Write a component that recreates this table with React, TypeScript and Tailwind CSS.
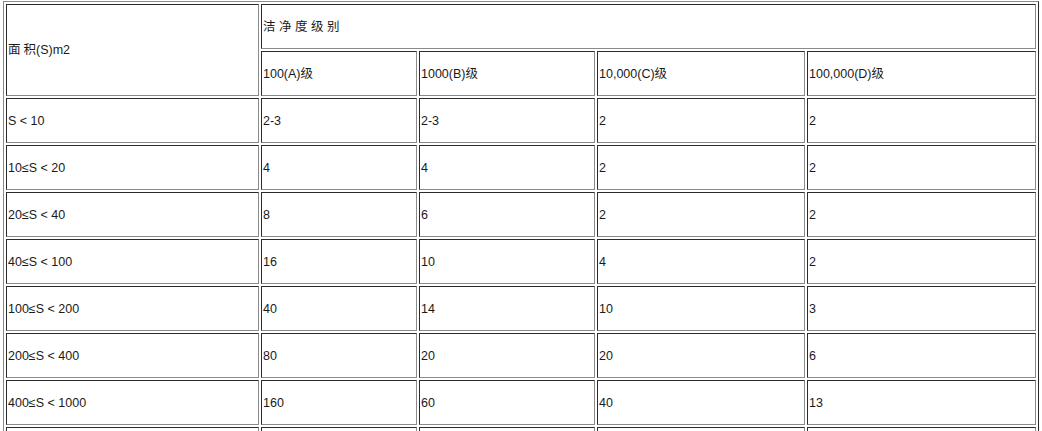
const rows: string[][] = [
  ["S < 10", "2-3", "2-3", "2", "2"],
  ["10≤S < 20", "4", "4", "2", "2"],
  ["20≤S < 40", "8", "6", "2", "2"],
  ["40≤S < 100", "16", "10", "4", "2"],
  ["100≤S < 200", "40", "14", "10", "3"],
  ["200≤S < 400", "80", "20", "20", "6"],
  ["400≤S < 1000", "160", "60", "40", "13"],
];

const cell =
  "h-[45px] px-[1px] align-middle text-left font-normal border border-t-[#2b2b2b] border-l-[#2b2b2b] border-b-[#8a8a8a] border-r-[#8a8a8a]";

export default function App() {
  return (
    <div className="w-[1042px] bg-white pt-[1px] pl-[3px] text-[12.5px] leading-[14px] text-[#1a1a1a] font-['Liberation_Sans','Noto_Sans_CJK_SC',sans-serif]">
      <table className="w-[1036px] table-fixed border-separate border-spacing-[2px] border border-t-[#8a8a8a] border-l-[#8a8a8a] border-b-[#2b2b2b] border-r-[#2b2b2b]">
        <colgroup>
          <col className="w-[253px]" />
          <col className="w-[156px]" />
          <col className="w-[176px]" />
          <col className="w-[208px]" />
          <col className="w-[229px]" />
        </colgroup>
        <tbody>
          <tr>
            <td rowSpan={2} className={cell}>
              <span className="mr-[3px]">面</span>积(S)m2
            </td>
            <td colSpan={4} className={cell}>
              <span className="tracking-[3.5px]">洁净度级别</span>
            </td>
          </tr>
          <tr>
            <td className={cell}>100(A)级</td>
            <td className={cell}>1000(B)级</td>
            <td className={cell}>10,000(C)级</td>
            <td className={cell}>100,000(D)级</td>
          </tr>
          {rows.map((r) => (
            <tr key={r[0]}>
              {r.map((v, i) => (
                <td key={i} className={cell}>
                  {v}
                </td>
              ))}
            </tr>
          ))}
          <tr>
            {[0, 1, 2, 3, 4].map((i) => (
              <td key={i} className={cell}>
                &nbsp;
              </td>
            ))}
          </tr>
        </tbody>
      </table>
    </div>
  );
}
